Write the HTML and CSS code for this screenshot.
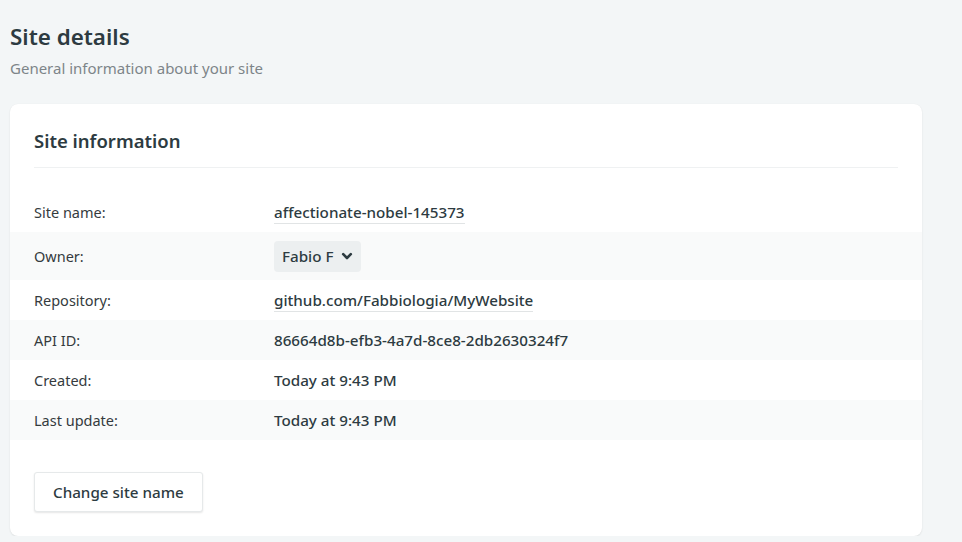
FILE: index.html
```html
<!DOCTYPE html>
<html>
<head>
<meta charset="utf-8">
<link rel="stylesheet" href="styles.css">
</head>
<body>
<div class="page">
  <header class="page-head">
    <h1 class="page-title">Site details</h1>
    <p class="page-sub">General information about your site</p>
  </header>
  <section class="card">
    <div class="card-head">
      <h2 class="card-title">Site information</h2>
    </div>
    <dl class="info">
      <div class="row">
        <dt class="label">Site name:</dt>
        <dd class="value"><span class="link">affectionate-nobel-145373</span></dd>
      </div>
      <div class="row row-alt row-tall">
        <dt class="label">Owner:</dt>
        <dd class="value"><span class="owner">Fabio F<svg class="chev" viewBox="0 0 12 12" width="12" height="12"><path d="M2.2 4.2 L6 8 L9.8 4.2" fill="none" stroke="#2d3b41" stroke-width="2.6" stroke-linecap="round" stroke-linejoin="round"/></svg></span></dd>
      </div>
      <div class="row">
        <dt class="label">Repository:</dt>
        <dd class="value"><span class="link">github.com/Fabbiologia/MyWebsite</span></dd>
      </div>
      <div class="row row-alt">
        <dt class="label">API ID:</dt>
        <dd class="value">86664d8b-efb3-4a7d-8ce8-2db2630324f7</dd>
      </div>
      <div class="row">
        <dt class="label">Created:</dt>
        <dd class="value">Today at 9:43 PM</dd>
      </div>
      <div class="row row-alt">
        <dt class="label">Last update:</dt>
        <dd class="value">Today at 9:43 PM</dd>
      </div>
    </dl>
    <div class="actions">
      <button class="btn">Change site name</button>
    </div>
  </section>
</div>
</body>
</html>
```

FILE: styles.css
```css
html, body {
  margin: 0;
  padding: 0;
  background: #f3f6f7;
}
body {
  font-family: "Noto Sans", "Open Sans", sans-serif;
  color: #2d3b41;
}
.page {
  padding: 21px 40px 0 10px;
}
.page-title {
  margin: 0;
  font-size: 22.4px;
  line-height: 32px;
  font-weight: 600;
  color: #2d3b41;
}
.page-sub {
  margin: 3px 0 0;
  font-size: 15px;
  line-height: 24px;
  color: #7d8589;
}
.card {
  margin-top: 24px;
  background: #fff;
  border-radius: 8px;
  box-shadow: 0 1px 2px rgba(0,0,0,0.08), 0 0 1px rgba(0,0,0,0.06);
  padding: 24px 0 24px;
  width: 912px;
  box-sizing: border-box;
}
.card-head {
  margin: 0 24px;
  padding-bottom: 13px;
  border-bottom: 1px solid #eff1f2;
}
.card-title {
  margin: 0;
  font-size: 18.5px;
  line-height: 26px;
  font-weight: 600;
  color: #2d3b41;
}
.info {
  margin: 24px 0 0;
  padding: 0;
}
.row {
  display: flex;
  align-items: center;
  height: 40px;
  padding: 0 24px;
}
.row-alt {
  background: #f9fafa;
}
.row-tall {
  height: 48px;
}
.label {
  width: 240px;
  font-size: 14.5px;
  color: #353b3e;
}
.value {
  margin: 0;
  font-size: 15.2px;
  font-weight: 500;
  color: #2d3b41;
}
.link {
  border-bottom: 1px solid #e1e4e5;
  padding-bottom: 1px;
}
.owner {
  display: inline-flex;
  align-items: center;
  gap: 8px;
  background: #eceff0;
  border-radius: 4px;
  height: 31px;
  padding: 0 8px 0 8px;
  font-size: 15.2px;
  font-weight: 500;
}
.chev {
  display: block;
}
.actions {
  padding: 32px 24px 0;
}
.btn {
  font-family: "Noto Sans", "Open Sans", sans-serif;
  font-size: 15.2px;
  font-weight: 500;
  color: #2d3b41;
  background: #fff;
  border: 1px solid #e6e9ea;
  border-radius: 3px;
  box-shadow: 0 1px 2px rgba(0,0,0,0.1);
  height: 40px;
  padding: 0 18px;
  cursor: pointer;
}
```
